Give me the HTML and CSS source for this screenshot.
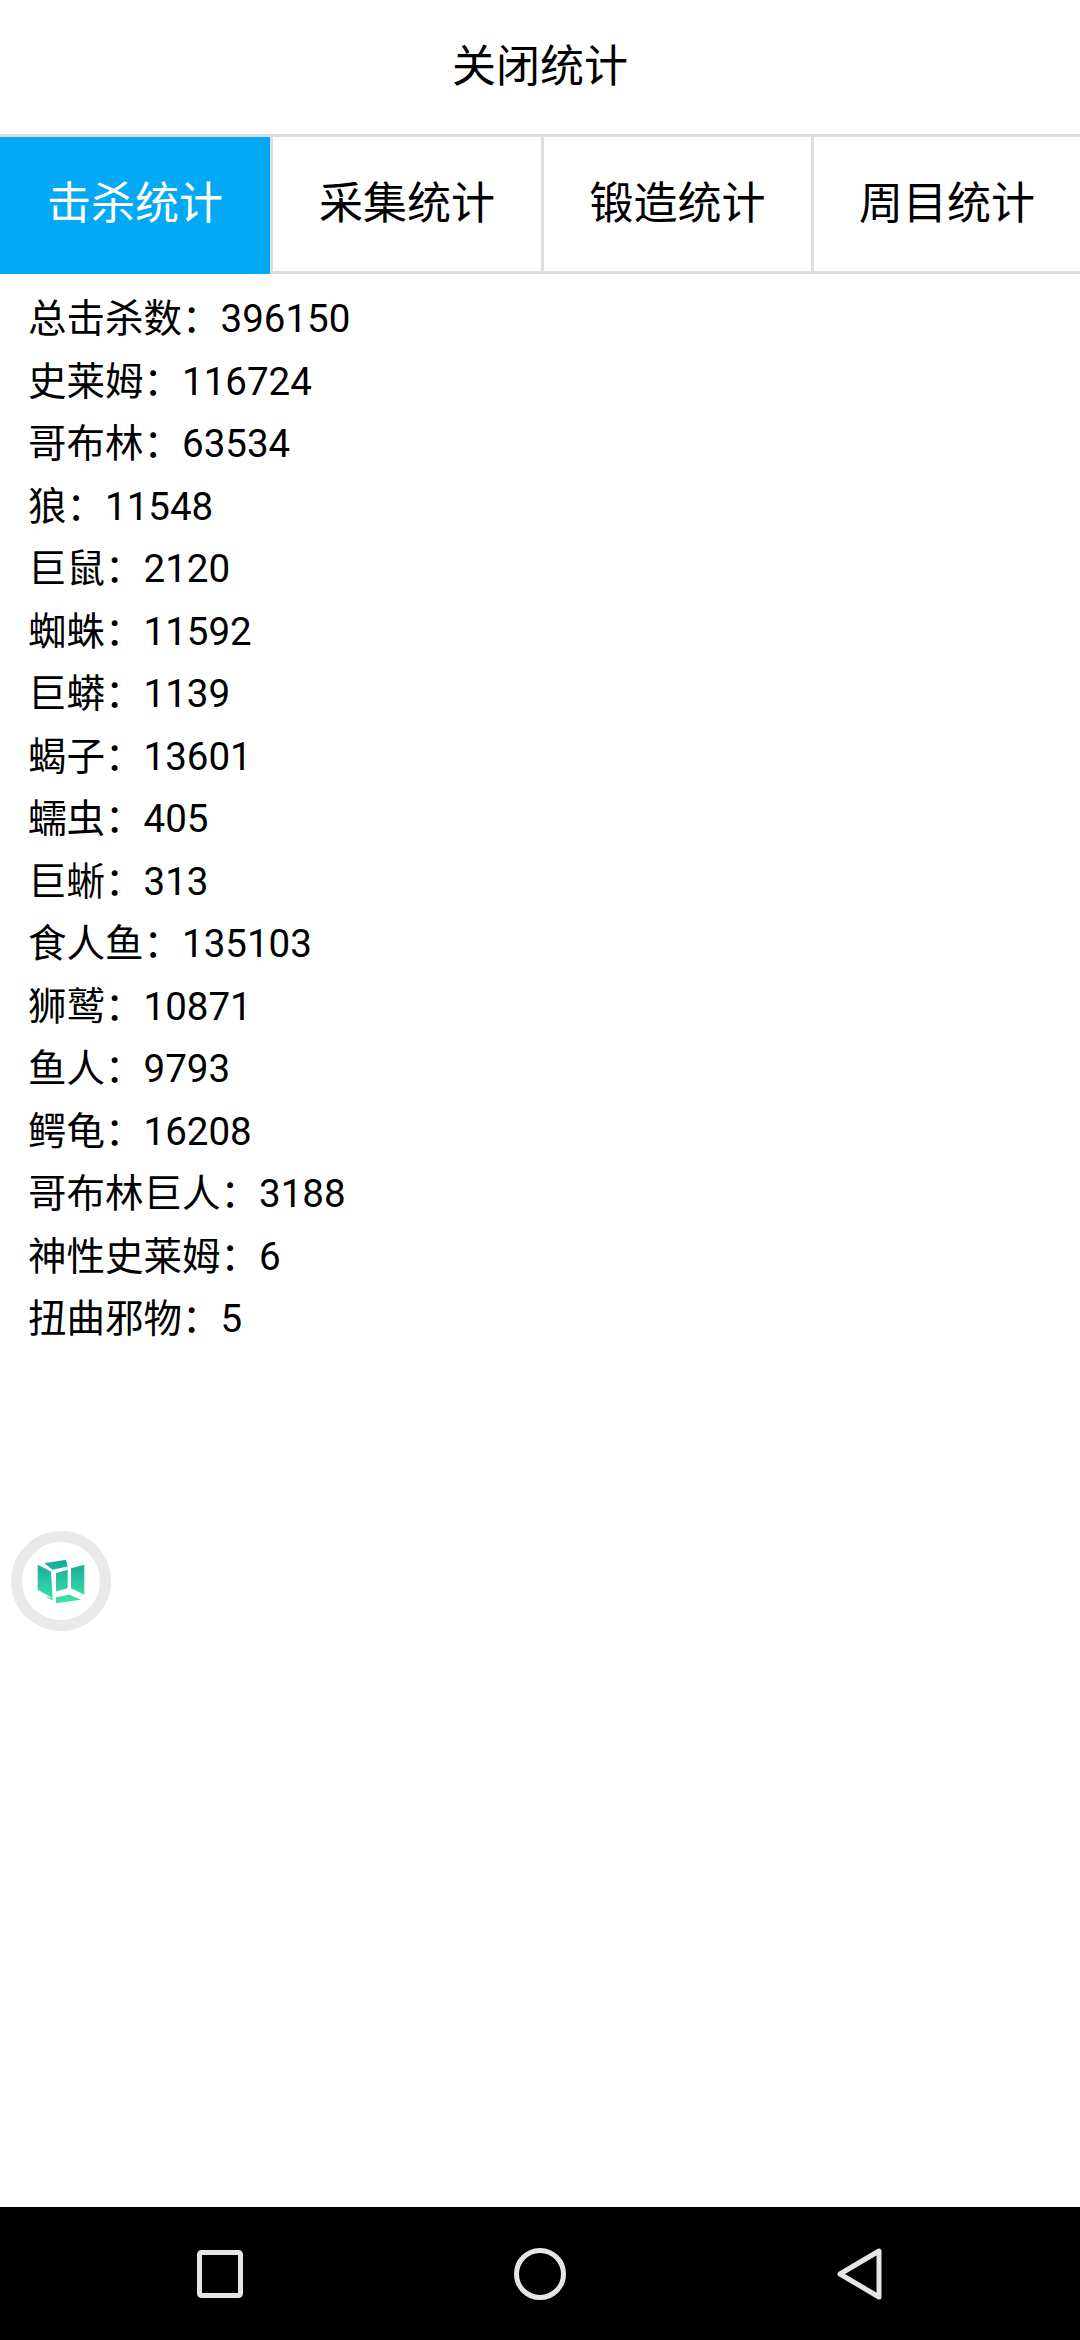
FILE: index.html
```html
<!DOCTYPE html>
<html lang="zh-CN">
<head>
<meta charset="utf-8">
<title>关闭统计</title>
<link rel="stylesheet" href="styles.css">
</head>
<body>
<div class="app">
  <div class="close">关闭统计</div>
  <div class="tabs">
    <div class="tab active">击杀统计</div>
    <div class="tab">采集统计</div>
    <div class="tab">锻造统计</div>
    <div class="tab">周目统计</div>
  </div>
  <div class="list">
    <div>总击杀数：396150</div>
    <div>史莱姆：116724</div>
    <div>哥布林：63534</div>
    <div>狼：11548</div>
    <div>巨鼠：2120</div>
    <div>蜘蛛：11592</div>
    <div>巨蟒：1139</div>
    <div>蝎子：13601</div>
    <div>蠕虫：405</div>
    <div>巨蜥：313</div>
    <div>食人鱼：135103</div>
    <div>狮鹫：10871</div>
    <div>鱼人：9793</div>
    <div>鳄龟：16208</div>
    <div>哥布林巨人：3188</div>
    <div>神性史莱姆：6</div>
    <div>扭曲邪物：5</div>
  </div>
  <div class="float">
    <svg width="50" height="47" viewBox="110 115 150 140">
      <defs>
        <linearGradient id="g" gradientUnits="userSpaceOnUse" x1="185" y1="115" x2="185" y2="255">
          <stop offset="0" stop-color="#16a596"/>
          <stop offset="1" stop-color="#3de8ac"/>
        </linearGradient>
      </defs>
      <path fill="url(#g)" d="M135 130 L200 120 L205 140 L160 150 Z"/>
      <path fill="url(#g)" d="M115 135 L155 155 L160 235 L115 210 Z"/>
      <path fill="url(#g)" d="M170 160 L205 150 L205 205 L170 215 Z"/>
      <path fill="url(#g)" d="M215 145 L255 135 L255 225 L215 205 Z"/>
      <path fill="url(#g)" d="M170 232 L210 225 L245 240 L170 250 Z"/>
      <path fill="url(#g)" d="M135 230 L160 235 L160 241 Z"/>
    </svg>
  </div>
  <div class="nav">
    <svg width="46" height="48" viewBox="0 0 46 48"><rect x="2.5" y="2.5" width="41" height="43" rx="2" fill="none" stroke="#e6e6e6" stroke-width="5"/></svg>
    <svg width="52" height="52" viewBox="0 0 52 52"><circle cx="26" cy="26" r="23.5" fill="none" stroke="#e6e6e6" stroke-width="5"/></svg>
    <svg width="46" height="52" viewBox="0 0 46 52"><path d="M42 3 L42 49 L3 26 Z" fill="none" stroke="#e6e6e6" stroke-width="5" stroke-linejoin="round"/></svg>
  </div>
</div>
</body>
</html>
```
FILE: styles.css
```css
html, body {
  margin: 0;
  padding: 0;
  background: #fff;
}
.app {
  position: relative;
  width: 1080px;
  height: 2340px;
  display: flex;
  flex-direction: column;
  font-family: Roboto, "Noto Sans CJK SC", sans-serif;
  color: #000;
  overflow: hidden;
}
.close {
  height: 134px;
  box-sizing: border-box;
  padding-bottom: 8px;
  display: flex;
  align-items: center;
  justify-content: center;
  font-size: 44px;
}
.tabs {
  height: 134px;
  display: grid;
  grid-template-columns: 273px 271px 270px 266px;
  border-top: 3px solid #dddddd;
  border-bottom: 3px solid #dddddd;
}
.tab {
  display: flex;
  align-items: center;
  justify-content: center;
  box-sizing: border-box;
  padding-bottom: 8px;
  font-size: 44px;
  border-right: 3px solid #dddddd;
}
.tab:last-child {
  border-right: 0;
}
.tab.active {
  background: #03a9f4;
  color: #fff;
  margin-bottom: -3px;
  padding-bottom: 11px;
}
.list {
  flex: 1;
  padding: 14px 0 0 28px;
  font-size: 38.5px;
  line-height: 62.5px;
}
.float {
  position: absolute;
  left: 11px;
  top: 1531px;
  width: 100px;
  height: 100px;
  box-sizing: border-box;
  border: 11px solid #e9e9e9;
  border-radius: 50%;
  background: #fff;
  display: flex;
  align-items: center;
  justify-content: center;
}
.nav {
  height: 133px;
  background: #000;
  display: grid;
  grid-template-columns: repeat(3, 320px);
  padding: 0 60px;
  justify-items: center;
  align-items: center;
}
```
